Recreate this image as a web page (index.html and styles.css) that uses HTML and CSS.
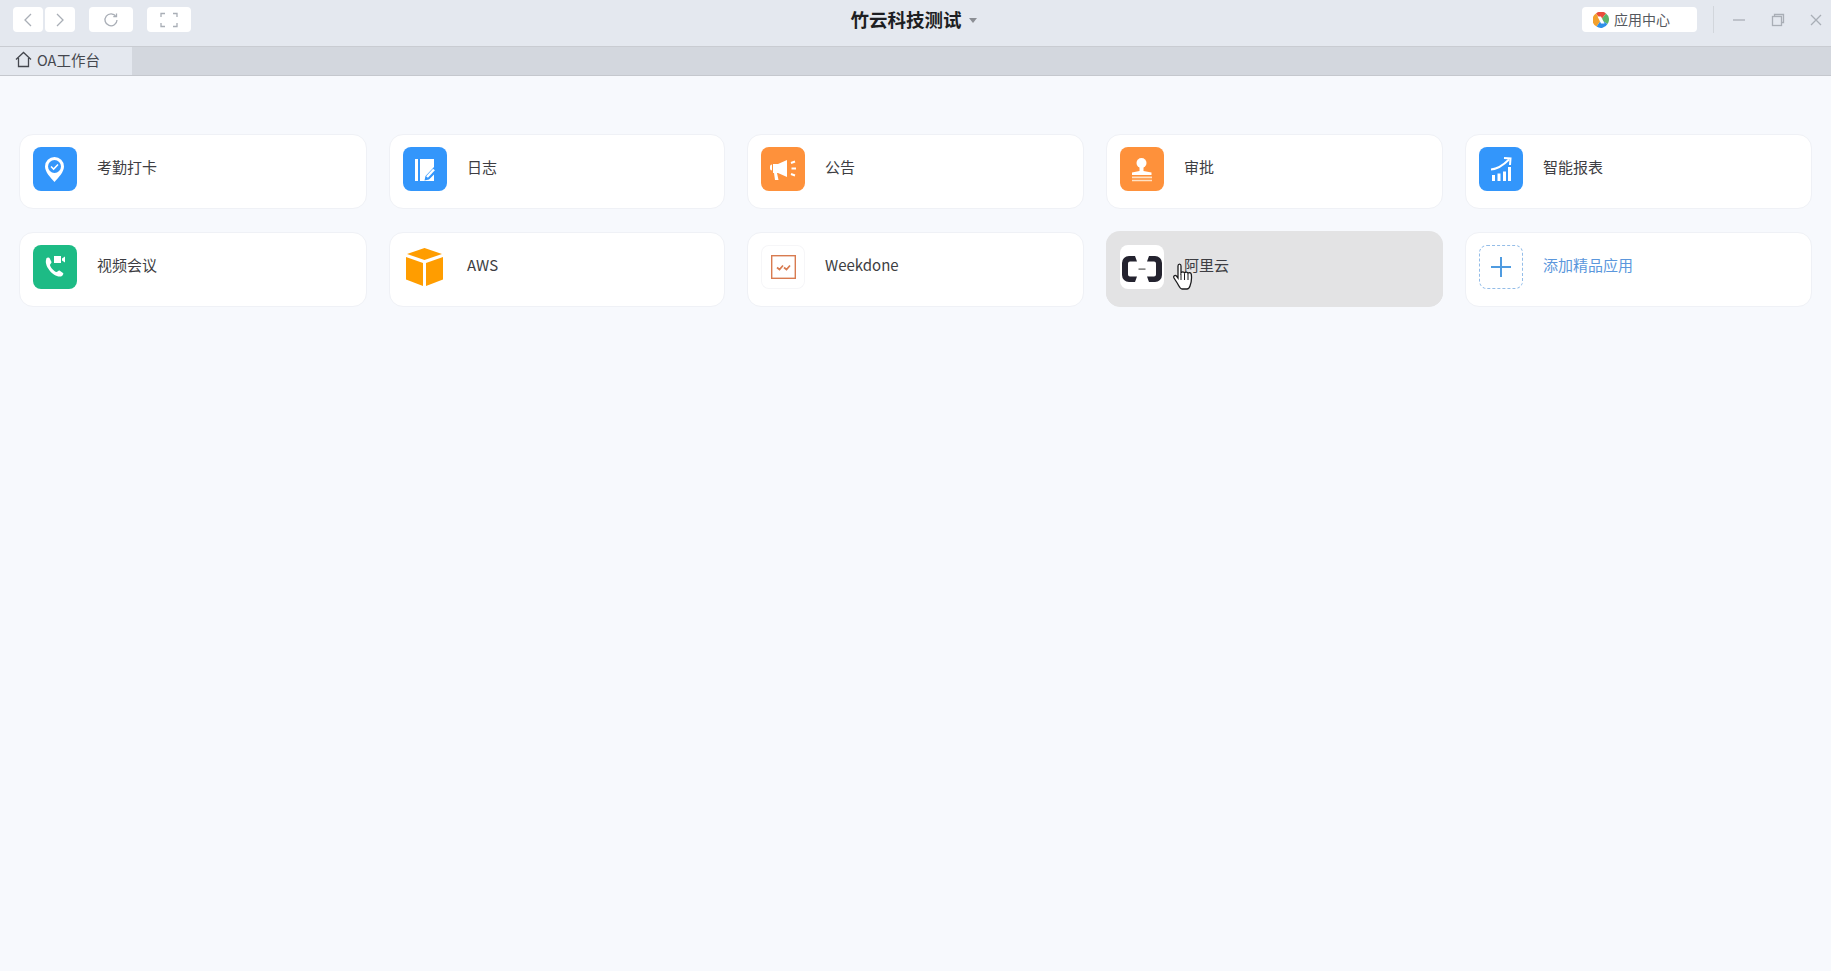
FILE: index.html
```html
<!DOCTYPE html>
<html lang="zh">
<head>
<meta charset="utf-8">
<title>竹云科技测试</title>
<link rel="stylesheet" href="styles.css">
</head>
<body>
<header class="titlebar">
  <div class="nav">
    <div class="nav-pair">
      <button class="btn btn-sm"><svg width="12" height="16" viewBox="0 0 12 16"><path d="M9 2 3 8l6 6" class="ln"/></svg></button>
      <button class="btn btn-sm"><svg width="12" height="16" viewBox="0 0 12 16"><path d="m3 2 6 6-6 6" class="ln"/></svg></button>
    </div>
    <button class="btn btn-md"><svg width="16" height="16" viewBox="0 0 16 16"><path d="M13 4.500A6 6 0 1 0 14 8" class="ln"/><path d="M13.500 1.500v3.200h-3.200" class="ln"/></svg></button>
    <button class="btn btn-md"><svg width="18" height="16" viewBox="0 0 18 16"><path d="M1 5V1.500h4M13 1.500h4V5M17 11v3.500h-4M5 14.500H1V11" class="ln"/></svg></button>
  </div>
  <div class="title">
    <span class="title-text">竹云科技测试</span>
    <span class="caret"></span>
  </div>
  <div class="right">
    <button class="btn app-center">
      <svg width="16" height="16" viewBox="0 0 16 16">
        <path d="M8 8 3 1.500A7.500 7.500 0 0 1 13 1.500Z" fill="#ea4d3b"/>
        <path d="M8 8 13 1.500A7.500 7.500 0 0 1 14.500 12Z" fill="#5bb56a"/>
        <path d="M8 8 14.500 12A7.500 7.500 0 0 1 3.500 14.500Z" fill="#2f8fe8"/>
        <path d="M8 8 3.500 14.500A7.500 7.500 0 0 1 3 1.500Z" fill="#f2a02c"/>
        <path d="M4.500 4.500h3.500l3.500 7H8Z" fill="#fff"/>
      </svg>
      <span class="app-label">应用中心</span>
    </button>
    <span class="divider"></span>
    <div class="win">
      <svg width="14" height="14" viewBox="0 0 14 14"><path d="M1 7h12" class="ln"/></svg>
      <svg width="14" height="14" viewBox="0 0 14 14"><path d="M3.500 3V1.500h9v8H11" class="ln"/><rect x="1.500" y="3.500" width="9" height="9" class="ln"/></svg>
      <svg width="14" height="14" viewBox="0 0 14 14"><path d="m2 2 10 10M12 2 2 12" class="ln"/></svg>
    </div>
  </div>
</header>

<nav class="tabbar">
  <div class="tab">
    <svg width="17" height="17" viewBox="0 0 17 17"><path d="M1 8.500 8.500 1.500 16 8.500M3.500 7v8.500h10V7" class="ln ln-dark"/></svg>
    <span>OA工作台</span>
  </div>
</nav>

<main class="grid">
  <a class="card">
    <span class="icon icon-blue"><svg width="44" height="44" viewBox="0 0 44 44"><path d="M21.500 10a9.500 9.500 0 0 1 9.500 9.500c0 5.500-5.500 11-9.500 15.500-4-4.500-9.500-10-9.500-15.500A9.500 9.500 0 0 1 21.500 10Z" fill="#fff"/><circle cx="21.500" cy="19.500" r="6.500" fill="#3396fb"/><path d="m18 19.500 2.600 2.600 4.400-4.600" fill="none" stroke="#fff" stroke-width="1.500"/></svg></span>
    <span class="name">考勤打卡</span>
  </a>
  <a class="card">
    <span class="icon icon-blue"><svg width="44" height="44" viewBox="0 0 44 44"><path d="M12 12h3v22h-3Z" fill="#fff"/><path d="M17 12h14v8l-8.500 9-1 4.500 4.500-1 5-5V34H17Z" fill="#fff"/><path d="m24 30 7-7.500" stroke="#fff" stroke-width="2.500"/></svg></span>
    <span class="name">日志</span>
  </a>
  <a class="card">
    <span class="icon icon-orange"><svg width="44" height="44" viewBox="0 0 44 44"><path d="M9 19.500a2 2 0 0 1 2-2v6a2 2 0 0 1-2-2ZM12 17h5l9-4v17l-9-4h-1l1.500 7H14l-1-7h-1Z" fill="#fff"/><path d="m30 16 4-1.500M30.500 21.500h4.500M30 27l4 1.500" stroke="#fff" stroke-width="2" fill="none"/></svg></span>
    <span class="name">公告</span>
  </a>
  <a class="card">
    <span class="icon icon-orange"><svg width="44" height="44" viewBox="0 0 44 44"><circle cx="21.500" cy="16" r="5" fill="#fff"/><path d="M19.500 19h4v5l8 1.500V28H12v-2.500l7.500-1.500Z" fill="#fff"/><path d="M12 29.500h20v1.800H12ZM12 32.800h20v1.500H12Z" fill="#ffe2c4"/></svg></span>
    <span class="name">审批</span>
  </a>
  <a class="card">
    <span class="icon icon-blue"><svg width="44" height="44" viewBox="0 0 44 44"><path d="M12 22.500c6-.5 12-4 18-10" fill="none" stroke="#fff" stroke-width="2"/><path d="m25 11 6.500.5-.5 6.500" fill="none" stroke="#fff" stroke-width="2"/><path d="M13 28h3v6h-3ZM18.500 26.500h3V34h-3ZM24 24.500h3V34h-3ZM29 20h3v14h-3Z" fill="#fff"/></svg></span>
    <span class="name">智能报表</span>
  </a>

  <a class="card">
    <span class="icon icon-green"><svg width="44" height="44" viewBox="0 0 44 44"><path d="M13 13.500c1-1 3-1.500 3.500-.5l2 4c.3.8-1.500 2-1.500 3 0 2 4 6.500 6.500 7 1 0 2-2 3-1.500l3.500 2.500c1 .8-.5 3-2 3.500-7 1.500-18-11-14.500-18Z" fill="#fff"/><path d="M21 11h7v7h-7ZM29 13.500l3-2v6l-3-2Z" fill="#fff"/></svg></span>
    <span class="name">视频会议</span>
  </a>
  <a class="card">
    <span class="icon"><svg width="44" height="44" viewBox="0 0 44 44"><path d="M21.500 3 39 9l-17.500 6L4 9Z" fill="#ff9d00"/><path d="m3 12 17 6v23l-17-6.500Z" fill="#ff9d00"/><path d="m23 18 17-6v22.500L23 41Z" fill="#ff9d00"/></svg></span>
    <span class="name">AWS</span>
  </a>
  <a class="card">
    <span class="icon icon-line"><svg width="44" height="44" viewBox="0 0 44 44"><rect x="10.700" y="10.700" width="23.600" height="22.600" fill="none" stroke="#d87b50" stroke-width="1.400"/><path d="m16 22.500 2.500 2 3.500-4M23 22.500l2.500 2 3.500-4" fill="none" stroke="#d87b50" stroke-width="1.700"/></svg></span>
    <span class="name">Weekdone</span>
  </a>
  <a class="card card-hover">
    <span class="icon icon-white"><svg width="44" height="44" viewBox="0 0 44 44"><path d="M15 11H9a7 7 0 0 0-7 7v12a7 7 0 0 0 7 7h6l2-5.500H10a2 2 0 0 1-2-2v-11a2 2 0 0 1 2-2h7ZM29 11h6a7 7 0 0 1 7 7v12a7 7 0 0 1-7 7h-6l-2-5.500h7a2 2 0 0 0 2-2v-11a2 2 0 0 0-2-2h-7Z" fill="#24232f"/><path d="M18.500 23.500h7v1.200h-7Z" fill="#555"/></svg></span>
    <span class="name">阿里云</span>
    <svg class="cursor" width="22" height="27" viewBox="0 0 22 27"><path d="M5 3c0-2.600 3-2.600 3 0v7c1-1.500 3-1.500 3.500 0 .8-1.300 3-1.300 3.500.3 1-1 3-.8 3.300 1 .5 4 .2 8-1.300 11.700-.5 1.500-1.500 3-3 3H9c-2 0-3-3-4.500-5.500L1 15c-1-2 1-3.500 2.500-2L5 15Z" fill="#fff" stroke="#1c1c1e" stroke-width="1.300"/><path d="M8 11v6M11.500 11v6M15 11v6" stroke="#1c1c1e" stroke-width="1" fill="none"/></svg>
  </a>
  <a class="card">
    <span class="icon icon-dashed"><svg width="42" height="42" viewBox="0 0 42 42"><path d="M21 11v20M11 21h20" stroke="#4f9be0" stroke-width="2" fill="none"/></svg></span>
    <span class="name name-link">添加精品应用</span>
  </a>
</main>
</body>
</html>
```
FILE: styles.css
```css
* { box-sizing: border-box; }
html, body { margin: 0; height: 100%; }
body {
  background: #f7f9fd;
  font-family: "Noto Sans CJK SC", "Noto Sans", sans-serif;
  color: #3d3d42;
  overflow: hidden;
}
.ln { fill: none; stroke: #a9aeb6; stroke-width: 1.300; }
.ln-dark { stroke: #44474e; }

.titlebar {
  height: 47px;
  background: #e4e8ef;
  display: grid;
  grid-template-columns: 1fr auto 1fr;
  align-items: start;
  padding: 7px 8px 0 8px;
  border-bottom: 1px solid #c9ccd2;
}
.nav { display: flex; align-items: center; gap: 14px; margin-left: 5px; }
.nav-pair { display: flex; gap: 2px; }
.btn {
  height: 25px;
  border: 0;
  padding: 0;
  background: #fff;
  border-radius: 4px;
  display: inline-flex;
  align-items: center;
  justify-content: center;
  font: inherit;
}
.btn-sm { width: 30px; }
.btn-md { width: 44px; }
.title { display: flex; align-items: center; gap: 7px; margin-right: 4px; }
.title-text { font-size: 18.500px; font-weight: 700; color: #1d1e22; line-height: 25px; }
.caret {
  width: 0; height: 0;
  margin-top: 1px;
  border-left: 4px solid transparent;
  border-right: 4px solid transparent;
  border-top: 5px solid #8b8e94;
}
.right { display: flex; align-items: center; justify-content: flex-end; height: 25px; }
.app-center {
  width: 115px;
  justify-content: flex-start;
  padding-left: 11px;
  gap: 5px;
  font-size: 14px;
  color: #55585e;
  line-height: 20px;
}
.app-label { margin-bottom: 2px; }
.divider { flex: none; width: 1px; height: 27px; background: #d2d6dc; margin: 0 18px 0 16px; }
.win { display: flex; gap: 24.500px; align-items: center; height: 25px; }

.tabbar {
  height: 29px;
  background: #d3d7de;
  border-bottom: 1px solid #c5c8ce;
  display: flex;
}
.tab {
  width: 132px;
  background: #e4e8ef;
  display: flex;
  align-items: center;
  gap: 5px;
  padding: 0 0 3px 15px;
  font-size: 14.500px;
  color: #44474e;
}

.grid {
  display: grid;
  grid-template-columns: 348px 336px 337px 337px 347px;
  grid-auto-rows: 75px;
  column-gap: 22px;
  row-gap: 23px;
  padding: 58px 0 0 19px;
}
.card {
  position: relative;
  display: flex;
  align-items: flex-start;
  gap: 20px;
  padding: 12px 13px;
  background: #fff;
  border: 1px solid #eff1f6;
  border-radius: 14px;
}
.card-hover {
  background: #e3e3e4;
  border-color: #e3e3e4;
  box-shadow: 0 -1px 0 #e3e3e4;
}
.icon {
  flex: none;
  width: 44px;
  height: 44px;
  border-radius: 8px;
  display: flex;
  align-items: center;
  justify-content: center;
}
.icon svg { display: block; }
.icon-blue { background: #3396fb; }
.icon-orange { background: #fe913b; }
.icon-green { background: #1dbb85; }
.icon-line { box-shadow: inset 0 0 0 1px #f6f6f8; }
.icon-white { background: #fff; }
.icon-dashed { border: 1px dashed #94bde8; }
.name {
  font-size: 15px;
  line-height: 24px;
  margin-top: 8px;
  color: #3d3d42;
}
.name-link { color: #5b97dc; }
.cursor { position: absolute; left: 66px; top: 30px; }
```
